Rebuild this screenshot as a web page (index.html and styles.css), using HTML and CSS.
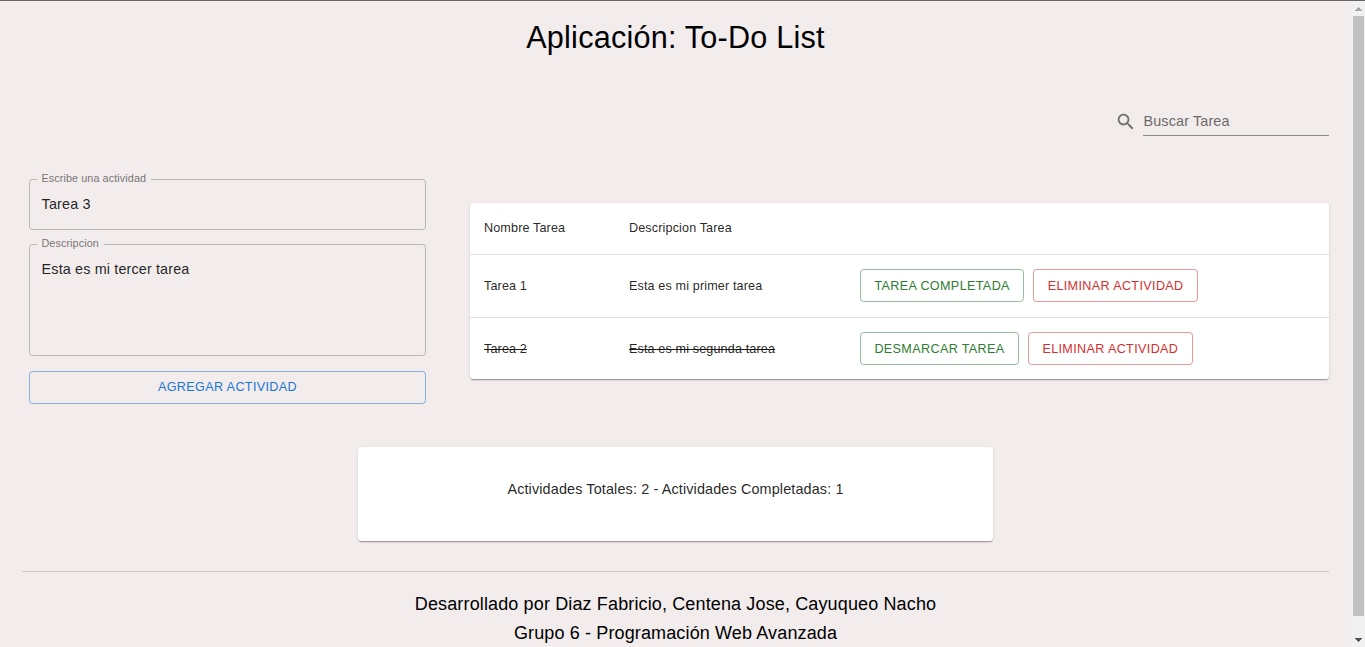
FILE: index.html
```html
<!DOCTYPE html>
<html lang="es">
<head>
<meta charset="utf-8">
<title>To-Do List</title>
<link rel="stylesheet" href="styles.css">
</head>
<body>
<div class="window">
  <main class="page">
    <h1 class="title">Aplicación: To-Do List</h1>
    <div class="search">
      <svg class="search-icon" viewBox="0 0 24 24"><path d="M15.5 14h-.79l-.28-.27C15.41 12.59 16 11.11 16 9.5 16 5.91 13.09 3 9.5 3S3 5.91 3 9.5 5.91 16 9.5 16c1.61 0 3.09-.59 4.23-1.57l.27.28v.79l5 4.99L20.49 19l-4.99-5zm-6 0C7.01 14 5 11.99 5 9.5S7.01 5 9.5 5 14 7.01 14 9.5 11.99 14 9.5 14z"/></svg>
      <div class="search-field">Buscar Tarea</div>
    </div>
    <div class="content">
      <form class="form">
        <fieldset class="field"><legend>Escribe una actividad</legend><div class="value">Tarea 3</div></fieldset>
        <fieldset class="field field-tall"><legend>Descripcion</legend><div class="value">Esta es mi tercer tarea</div></fieldset>
        <button type="button" class="btn btn-primary">AGREGAR ACTIVIDAD</button>
      </form>
      <section class="paper table">
        <div class="row head"><span>Nombre Tarea</span><span>Descripcion Tarea</span></div>
        <div class="row">
          <span>Tarea 1</span><span>Esta es mi primer tarea</span>
          <div class="actions"><button class="btn btn-success">TAREA COMPLETADA</button><button class="btn btn-error">ELIMINAR ACTIVIDAD</button></div>
        </div>
        <div class="row last">
          <span class="done">Tarea 2</span><span class="done">Esta es mi segunda tarea</span>
          <div class="actions"><button class="btn btn-success">DESMARCAR TAREA</button><button class="btn btn-error">ELIMINAR ACTIVIDAD</button></div>
        </div>
      </section>
    </div>
    <section class="paper summary">Actividades Totales: 2 - Actividades Completadas: 1</section>
    <footer class="footer">
      <div>Desarrollado por Diaz Fabricio, Centena Jose, Cayuqueo Nacho</div>
      <div>Grupo 6 - Programación Web Avanzada</div>
    </footer>
  </main>
  <div class="scrollbar">
    <svg class="arrow arrow-up" viewBox="0 0 7 4" shape-rendering="crispEdges"><path d="M3 0h1v1h1v1h1v1h1v1H0V3h1V2h1V1h1z"/></svg>
    <div class="thumb"></div>
    <svg class="arrow arrow-down" viewBox="0 0 7 4" shape-rendering="crispEdges"><path d="M0 0h7v1H6v1H5v1H4v1H3V3H2V2H1V1H0z"/></svg>
  </div>
</div>
</body>
</html>
```
FILE: styles.css
```css
* { box-sizing: border-box; }
body {
  margin: 0;
  background: #f2ecec;
  font-family: "Liberation Sans", Arial, sans-serif;
  color: rgba(0, 0, 0, 0.87);
  overflow: hidden;
}
.window {
  display: flex;
  height: 647px;
  border-top: 1px solid #6b6465;
}
.page {
  flex: 1;
  padding: 17px 22px 0;
  overflow: hidden;
}
.title {
  margin: 0;
  font-size: 30.6px;
  font-weight: 400;
  line-height: 38px;
  letter-spacing: 0.00735em;
  text-align: center;
  color: #000;
}
.search {
  display: flex;
  justify-content: flex-end;
  align-items: flex-end;
  height: 80px;
}
.search-icon {
  width: 21.6px;
  height: 21.6px;
  margin: 0 6.2px 3px 0;
  fill: #726f6f;
}
.search-field {
  width: 186px;
  height: 29px;
  padding: 4px 0 0 0.5px;
  border-bottom: 1px solid #8c8989;
  font-size: 14.4px;
  line-height: 20.7px;
  letter-spacing: 0.00938em;
  color: #6d6a6a;
}
.content {
  display: grid;
  grid-template-columns: 397px 859px;
  column-gap: 44px;
  padding: 37px 0 0 7px;
}
.form {
  display: flex;
  flex-direction: column;
}
.field {
  height: 57px;
  margin: 0 0 8px;
  padding: 0;
  border: 1px solid #b9b5b5;
  border-radius: 3.6px;
}
.field-tall {
  height: 118px;
  margin-bottom: 15px;
}
.field legend {
  height: 13px;
  margin-left: 7px;
  padding: 0 4.8px 0 4.4px;
  font-size: 10.8px;
  line-height: 11px;
  letter-spacing: 0.00938em;
  color: #797676;
}
.value {
  padding: 8px 0 0 11.6px;
  font-size: 14.4px;
  line-height: 20.7px;
  letter-spacing: 0.00938em;
}
.btn {
  height: 33px;
  padding: 0 13.4px;
  border: 1px solid;
  border-radius: 3.6px;
  background: transparent;
  font: 400 12.6px/22px "Liberation Sans", Arial, sans-serif;
  letter-spacing: 0.02857em;
  white-space: nowrap;
}
.btn-primary {
  padding-bottom: 2px;
  color: #1976d2;
  border-color: rgba(25, 118, 210, 0.5);
}
.btn-success {
  color: #2e7d32;
  border-color: rgba(46, 125, 50, 0.5);
}
.btn-error {
  color: #d32f2f;
  border-color: rgba(211, 47, 47, 0.5);
}
.paper {
  background: #fff;
  border-radius: 3.6px;
  box-shadow: 0 2px 1px -1px rgba(0, 0, 0, 0.2), 0 1px 1px rgba(0, 0, 0, 0.14), 0 1px 3px rgba(0, 0, 0, 0.12);
}
.table {
  height: 176px;
  margin-top: 30px;
  font-size: 12.6px;
  letter-spacing: 0.01071em;
}
.row {
  display: grid;
  grid-template-columns: 145px 231px 1fr;
  align-items: center;
  height: 63px;
  padding-left: 14px;
  border-bottom: 1px solid #e0e0e0;
}
.row .actions { padding-bottom: 1px; }
.head {
  height: 52px;
  padding-bottom: 2px;
}
.last {
  height: 61px;
  border-bottom: 0;
}
.row.last .actions { padding-bottom: 0; }
.done { text-decoration: line-through; }
.actions {
  display: flex;
  gap: 9px;
}
.summary {
  width: 635px;
  height: 94px;
  margin: 43px auto 30px;
  padding-top: 32px;
  font-size: 14.4px;
  line-height: 21px;
  letter-spacing: 0.00938em;
  text-align: center;
}
.footer {
  padding-top: 18px;
  border-top: 1px solid #cdc9c9;
  font-size: 18px;
  line-height: 29px;
  letter-spacing: 0.0075em;
  text-align: center;
  color: #000;
}
.scrollbar {
  display: flex;
  flex-direction: column;
  align-items: center;
  width: 14px;
  padding: 6px 0 5px;
  background: #f1f1f1;
}
.arrow {
  width: 7px;
  height: 4px;
}
.arrow-up { fill: #a3a3a3; }
.arrow-down { fill: #505050; }
.thumb {
  width: 11px;
  height: 600px;
  margin: 5px 0 22px 1px;
  background: #c1c1c1;
}
```
